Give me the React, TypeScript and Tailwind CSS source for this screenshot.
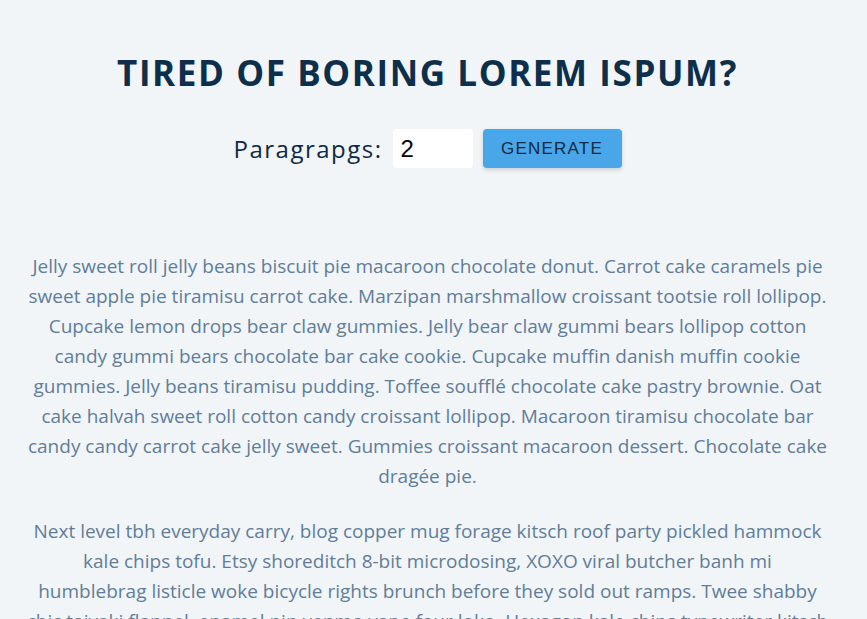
const paragraphs = [
  [
    "Jelly sweet roll jelly beans biscuit pie macaroon chocolate donut. Carrot cake caramels pie",
    "sweet apple pie tiramisu carrot cake. Marzipan marshmallow croissant tootsie roll lollipop.",
    "Cupcake lemon drops bear claw gummies. Jelly bear claw gummi bears lollipop cotton",
    "candy gummi bears chocolate bar cake cookie. Cupcake muffin danish muffin cookie",
    "gummies. Jelly beans tiramisu pudding. Toffee soufflé chocolate cake pastry brownie. Oat",
    "cake halvah sweet roll cotton candy croissant lollipop. Macaroon tiramisu chocolate bar",
    "candy candy carrot cake jelly sweet. Gummies croissant macaroon dessert. Chocolate cake",
    "dragée pie.",
  ],
  [
    "Next level tbh everyday carry, blog copper mug forage kitsch roof party pickled hammock",
    "kale chips tofu. Etsy shoreditch 8-bit microdosing, XOXO viral butcher banh mi",
    "humblebrag listicle woke bicycle rights brunch before they sold out ramps. Twee shabby",
    "chic taiyaki flannel, enamel pin venmo vape four loko. Hexagon kale chips typewriter kitsch",
    "8-bit organic plaid small batch keffiyeh ethical banh mi narwhal echo park cronut.",
  ],
];

export default function App() {
  return (
    <main className="min-h-screen bg-[#f1f5f8] font-['Open_Sans',sans-serif]">
      <section className="mx-auto w-[820px] -translate-x-[6px] pt-[49px] text-center">
        <h1 className="text-[35px] font-bold uppercase leading-[48px] tracking-[1.6px] text-[#0d2f4b]">
          Tired of boring lorem ispum?
        </h1>
        <form className="mt-[32px] flex items-center justify-center" onSubmit={(e) => e.preventDefault()}>
          <label htmlFor="amount" className="text-[24px] tracking-[1.5px] text-[#102a43]">
            Paragrapgs:
          </label>
          <input
            id="amount"
            type="number"
            defaultValue={2}
            className="ml-[10px] h-[39px] w-[80px] rounded-[4px] bg-white px-[8px] font-['Liberation_Sans',sans-serif] text-[24px] text-black outline-none"
          />
          <button
            type="submit"
            className="ml-[10px] h-[39px] w-[139px] rounded-[4px] bg-[#49a6e9] font-['Liberation_Sans',sans-serif] text-[17px] uppercase tracking-[1.2px] text-[#102a43] shadow-[0_2px_4px_rgba(0,0,0,0.15)]"
          >
            Generate
          </button>
        </form>
        <article className="mt-[83px]">
          {paragraphs.map((lines) => (
            <p key={lines[0]} className="mb-[25px] text-[19px] leading-[30px] text-[#617d98]">
              {lines.map((line) => (
                <span key={line} className="block whitespace-nowrap">
                  {line}
                </span>
              ))}
            </p>
          ))}
        </article>
      </section>
    </main>
  );
}
